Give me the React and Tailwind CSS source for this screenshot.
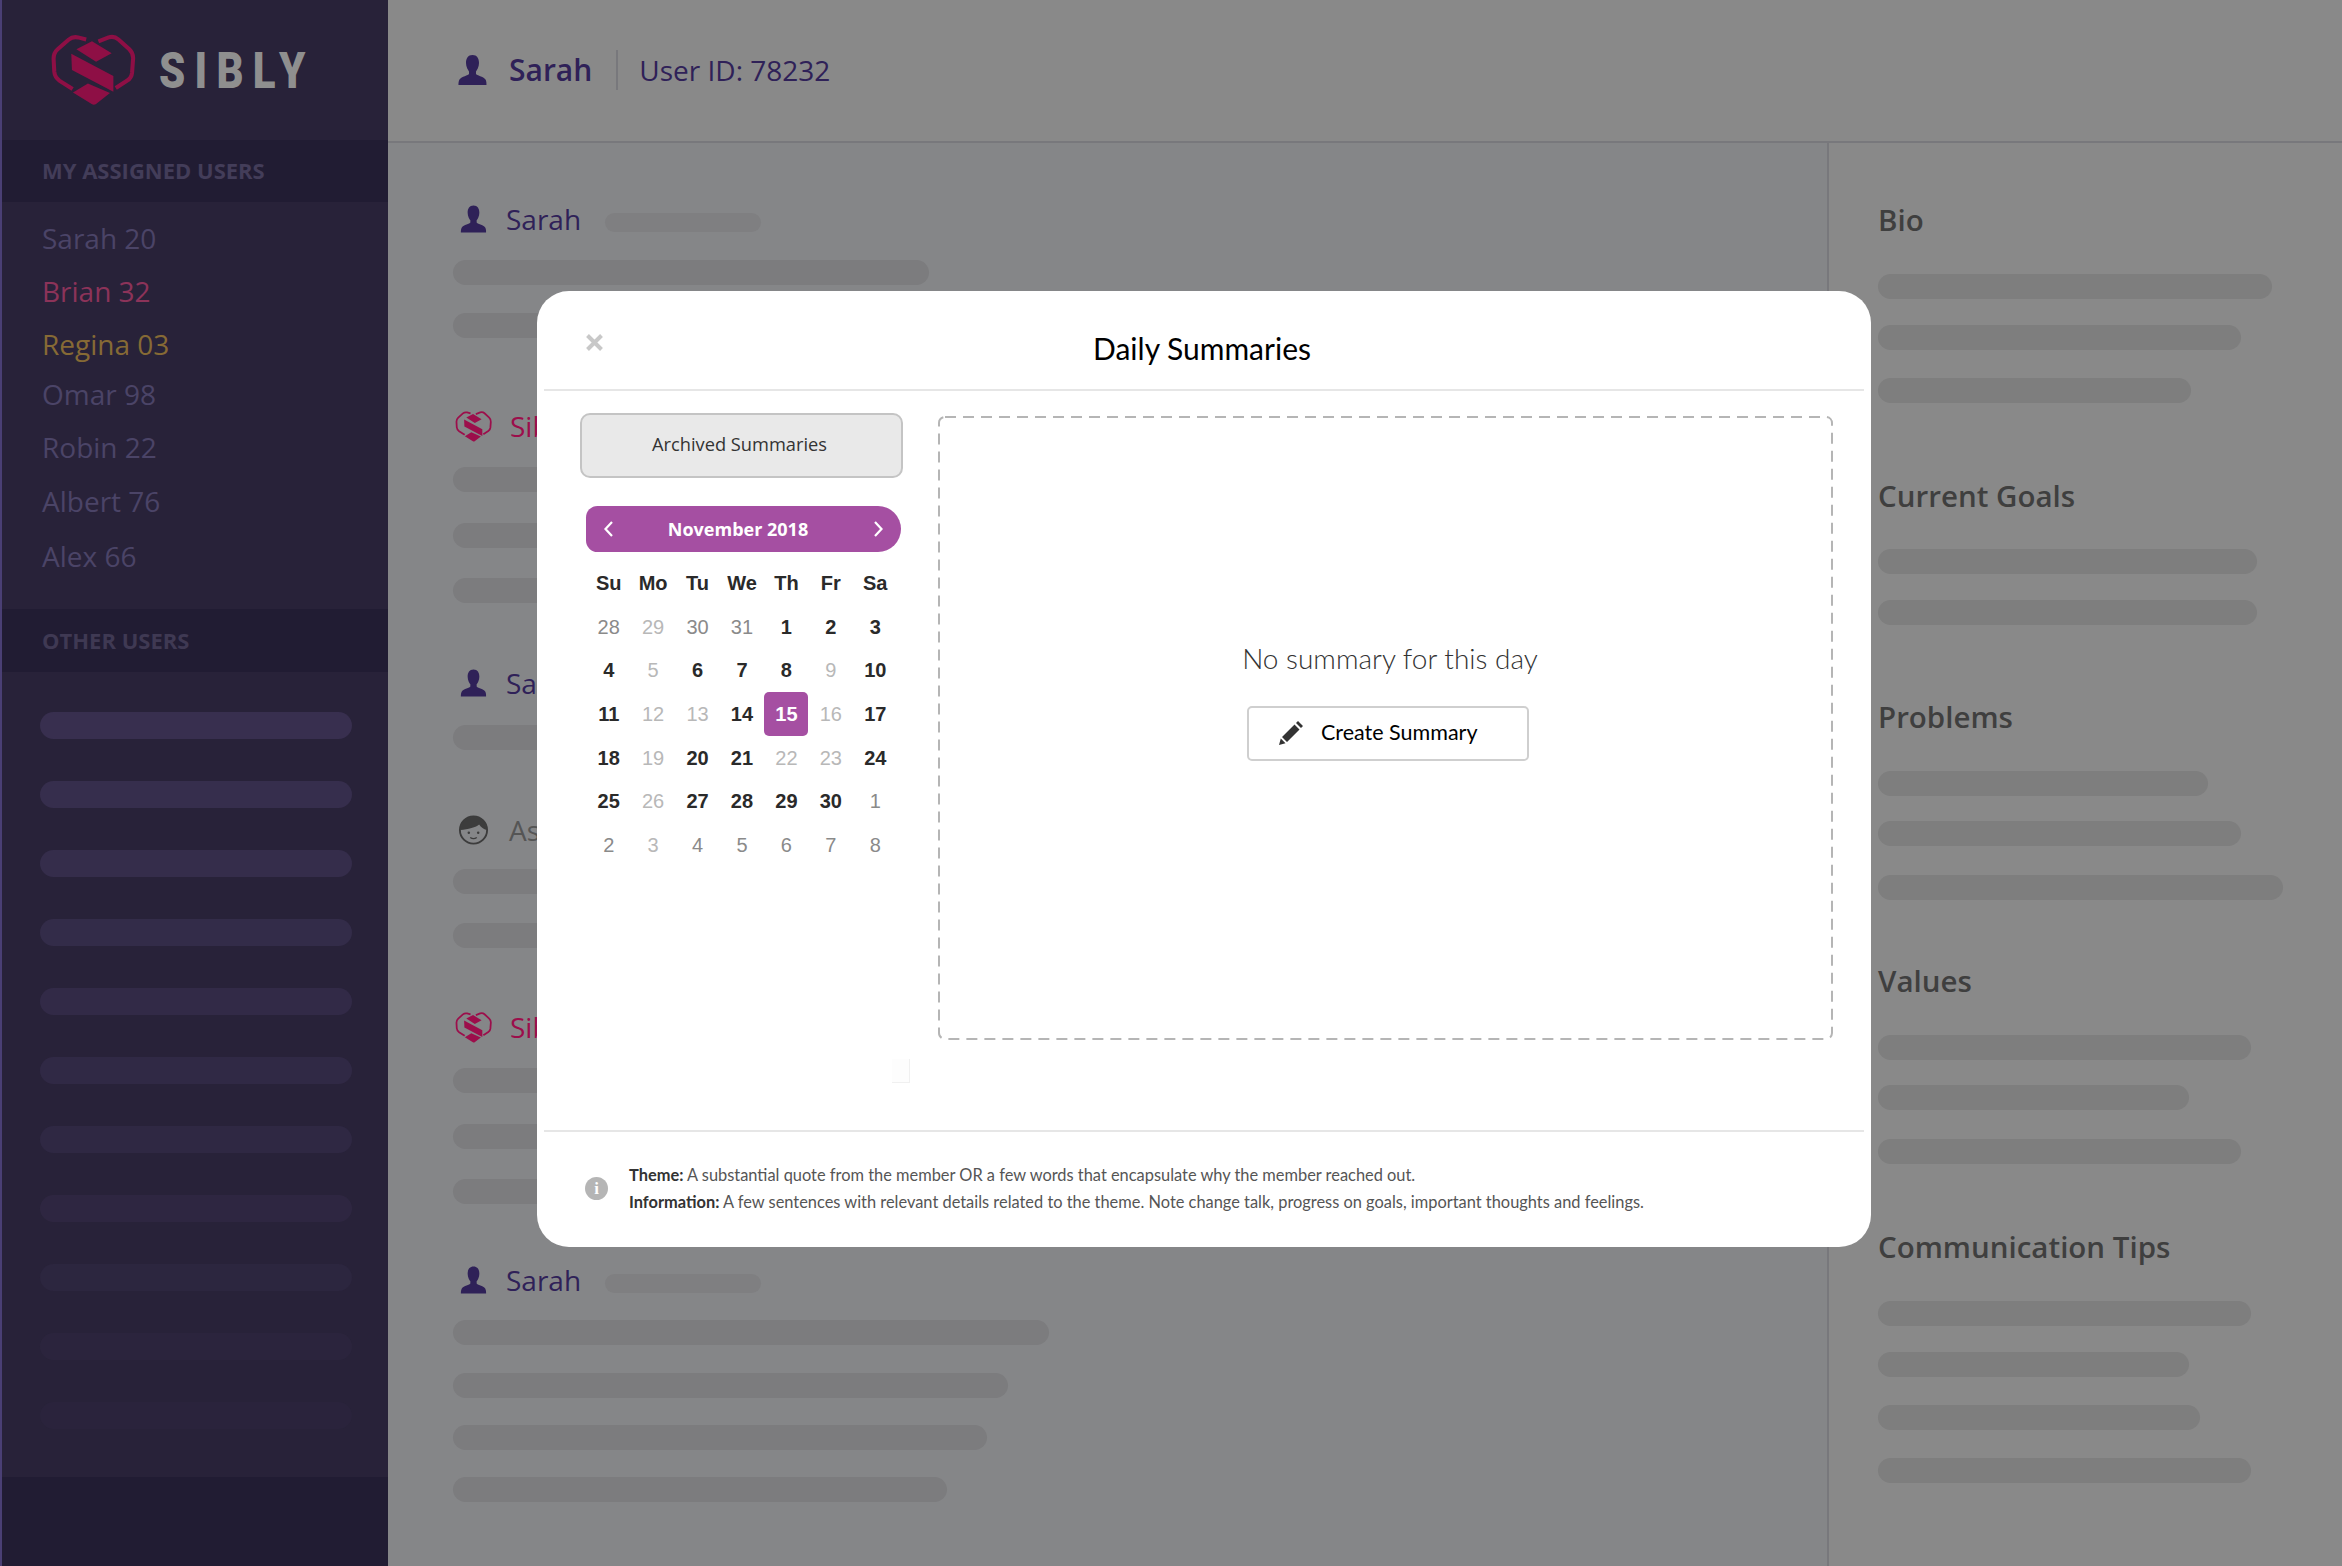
const sans = "font-['Open_Sans',sans-serif]";

function PersonIcon({ className }) {
  return (
    <svg className={className} viewBox="0 0 30 30" fill="currentColor">
      <path d="M15 0C10.5 0 8.5 3.500 8.500 8c0 4 2 7 3 8.500V19c-.5 1.500-7.500 2.500-9.500 5.500C.8 26.500 1 30 1 30h28s.2-3.500-1-5.500c-2-3-9-4-9.500-5.500v-2.500c1-1.500 3-4.500 3-8.500 0-4.500-2-8-6.500-8z" />
    </svg>
  );
}

function FaceIcon({ className }) {
  return (
    <svg className={className} viewBox="0 0 32 32">
      <circle cx="16" cy="16" r="14.500" fill="none" stroke="#3c3c3c" strokeWidth="2" />
      <path d="M2 16C2 7 8 1.500 16 1.500S30 7 30 16c-3-1-6-3-8-6-3 3-12 5-20 6z" fill="#3c3c3c" />
      <circle cx="11" cy="19" r="1.300" fill="#3c3c3c" />
      <circle cx="21" cy="19" r="1.300" fill="#3c3c3c" />
      <path d="M12.500 24c2 1.500 5 1.500 7 0" fill="none" stroke="#3c3c3c" strokeWidth="1.300" />
    </svg>
  );
}

// heart outline with the S cut into it
function Logo({ className, color = '#8e0f45' }) {
  return (
    <svg className={className} viewBox="60 58 252 212">
      <path d="M166 74l-24-6c-10-2-20 0-28 7L82 103c-8 7-12 17-12 28l2 38c1 12 6 20 16 27l38 24" fill="none" stroke={color} strokeWidth="12" />
      <path d="M202 80l30-12c10-3 21-1 29 6l32 29c8 8 12 18 11 29l-3 40c-1 10-6 18-14 23l-34 22" fill="none" stroke={color} strokeWidth="12" />
      <path d="M137 103l46-24 58 36-46 25z" fill={color} />
      <path d="M122 116l124 66v46l-122-64z" fill={color} />
      <path d="M127 230l44-26 65 28-42 33c-4 2-8 2-12-1z" fill={color} />
    </svg>
  );
}

function Bar({ w, className }) {
  return <div className={`h-[25px] rounded-full ${className}`} style={{ width: w }} />;
}

const assigned = [
  { name: 'Sarah 20', cls: 'text-[#4b4467]' },
  { name: 'Brian 32', cls: 'mt-[13px] text-[#8c3359]' },
  { name: 'Regina 03', cls: 'mt-[13px] text-[#866a35]' },
  { name: 'Omar 98', cls: 'mt-[10px] text-[#4b4467]' },
  { name: 'Robin 22', cls: 'mt-[13px] text-[#4b4467]' },
  { name: 'Albert 76', cls: 'mt-[14px] text-[#4b4467]' },
  { name: 'Alex 66', cls: 'mt-[15px] text-[#4b4467]' },
];

const otherBars = [0, 1, 2, 3, 4, 5, 6, 7, 8, 9, 10];

const feed = [
  {
    kind: 'person', label: 'Sarah', top: 'mt-[59px]', small: true,
    bars: [{ w: 476, cls: 'mt-[24px]' }, { w: 440, cls: 'mt-[28px]' }],
  },
  {
    kind: 'logo', label: 'Sibly', top: 'mt-[71px]',
    bars: [{ w: 520, cls: 'mt-[24px]' }, { w: 480, cls: 'mt-[31px]' }, { w: 500, cls: 'mt-[30px]' }],
  },
  {
    kind: 'person', label: 'Sarah', top: 'mt-[63px]',
    bars: [{ w: 460, cls: 'mt-[25px]' }],
  },
  {
    kind: 'face', label: 'As', top: 'mt-[63px]',
    bars: [{ w: 500, cls: 'mt-[22px]' }, { w: 480, cls: 'mt-[29px]' }],
  },
  {
    kind: 'logo', label: 'Sibly', top: 'mt-[62px]',
    bars: [{ w: 520, cls: 'mt-[24px]' }, { w: 480, cls: 'mt-[31px]' }, { w: 500, cls: 'mt-[30px]' }],
  },
  {
    kind: 'person', label: 'Sarah', top: 'mt-[59px]', small: true,
    bars: [{ w: 596, cls: 'mt-[23px]' }, { w: 555, cls: 'mt-[28px]' }, { w: 534, cls: 'mt-[27px]' }, { w: 494, cls: 'mt-[27px]' }],
  },
];

const panels = [
  { title: 'Bio', top: 'mt-[60px]', bars: [{ w: 394, cls: 'mt-[37px]' }, { w: 363, cls: 'mt-[26px]' }, { w: 313, cls: 'mt-[28px]' }] },
  { title: 'Current Goals', top: 'mt-[76px]', bars: [{ w: 379, cls: 'mt-[36px]' }, { w: 379, cls: 'mt-[26px]' }] },
  { title: 'Problems', top: 'mt-[75px]', bars: [{ w: 330, cls: 'mt-[37px]' }, { w: 363, cls: 'mt-[25px]' }, { w: 405, cls: 'mt-[29px]' }] },
  { title: 'Values', top: 'mt-[64px]', bars: [{ w: 373, cls: 'mt-[37px]' }, { w: 311, cls: 'mt-[25px]' }, { w: 363, cls: 'mt-[29px]' }] },
  { title: 'Communication Tips', top: 'mt-[66px]', bars: [{ w: 373, cls: 'mt-[37px]' }, { w: 311, cls: 'mt-[26px]' }, { w: 322, cls: 'mt-[28px]' }, { w: 373, cls: 'mt-[28px]' }] },
];

const weekDays = ['Su', 'Mo', 'Tu', 'We', 'Th', 'Fr', 'Sa'];

const days = [
  [28, 'r'], [29, 'f'], [30, 'r'], [31, 'r'], [1, 'b'], [2, 'b'], [3, 'b'],
  [4, 'b'], [5, 'f'], [6, 'b'], [7, 'b'], [8, 'b'], [9, 'f'], [10, 'b'],
  [11, 'b'], [12, 'f'], [13, 'f'], [14, 'b'], [15, 's'], [16, 'f'], [17, 'b'],
  [18, 'b'], [19, 'f'], [20, 'b'], [21, 'b'], [22, 'f'], [23, 'f'], [24, 'b'],
  [25, 'b'], [26, 'f'], [27, 'b'], [28, 'b'], [29, 'b'], [30, 'b'], [1, 'r'],
  [2, 'r'], [3, 'f'], [4, 'r'], [5, 'r'], [6, 'r'], [7, 'r'], [8, 'r'],
];

const dayStyle = {
  b: 'font-bold text-[#2a2a2a]',
  r: 'text-[#8a8a8a]',
  f: 'text-[#b8b8b8]',
  s: 'font-bold text-white bg-[#a54fa2] rounded-[5px] w-[44px] h-[44px]',
};

function FeedHeader({ item }) {
  return (
    <div className="flex h-[34px] items-center">
      {item.kind === 'person' && <PersonIcon className="ml-[7px] mr-[19px] h-[28px] w-[27px] text-[#2f2158]" />}
      {item.kind === 'logo' && <Logo className="ml-[2px] mr-[18px] h-[35px] w-[37px]" color="#9c0e4b" />}
      {item.kind === 'face' && <FaceIcon className="ml-[5px] mr-[20px] h-[30px] w-[31px]" />}
      <span className={`text-[28px] font-medium ${item.kind === 'logo' ? 'font-bold text-[#9c0e4b]' : item.kind === 'face' ? 'text-[#555555]' : 'text-[#2f2158]'}`}>{item.label}</span>
      {item.small && <div className="ml-[24px] mt-[6px] h-[19px] w-[156px] rounded-full bg-[#7f7f81]" />}
    </div>
  );
}

function Calendar() {
  return (
    <div>
      <div className="ml-[6px] mt-[28px] flex h-[46px] w-[315px] items-center justify-between rounded-l-[12px] rounded-r-[24px] bg-[#a54fa2] px-[17px] text-white">
        <svg className="h-[18px] w-[11px]" viewBox="0 0 11 18" fill="none" stroke="currentColor" strokeWidth="2.200"><path d="M9 2L2.500 9 9 16" /></svg>
        <span className="mr-[11px] text-[18px] font-bold">November 2018</span>
        <svg className="h-[18px] w-[11px]" viewBox="0 0 11 18" fill="none" stroke="currentColor" strokeWidth="2.200"><path d="M2 2l6.500 7L2 16" /></svg>
      </div>
      <div className="ml-[6.500px] mt-[9px] grid w-[311px] grid-cols-7 auto-rows-[43.7px] font-['Liberation_Sans',sans-serif] text-[20px]">
        {weekDays.map((d) => (
          <div key={d} className="flex items-center justify-center font-bold text-[#2a2a2a]">{d}</div>
        ))}
        {days.map(([n, t], i) => (
          <div key={i} className="flex items-center justify-center">
            <div className={`flex items-center justify-center ${dayStyle[t]}`}>{n}</div>
          </div>
        ))}
      </div>
    </div>
  );
}

export default function App() {
  return (
    <div className={`relative flex h-screen w-full overflow-hidden bg-[#858688] ${sans}`}>
      <aside className="flex w-[388px] shrink-0 flex-col border-l-2 border-[#4a3f74] bg-[#282239]">
        <div className="flex h-[140px] shrink-0 items-center pl-[48px]">
          <Logo className="h-[72px] w-[86px]" />
          <span className="ml-[23px] mt-[2px] w-[146px] origin-left scale-x-[0.84] font-['Roboto',sans-serif] text-[50px] font-black tracking-[0.22em] whitespace-nowrap text-[#8f8f8f]">SIBLY</span>
        </div>
        <div className="flex h-[62px] shrink-0 items-center bg-[#211c33] pb-[2px] pl-[40px] text-[22px] font-bold text-[#433d59]">MY ASSIGNED USERS</div>
        <ul className="pl-[40px] pt-[16px]">
          {assigned.map((u) => (
            <li key={u.name} className={`flex h-[40px] items-center text-[28px] leading-[40px] ${u.cls}`}>{u.name}</li>
          ))}
        </ul>
        <div className="mt-[33px] flex h-[63px] shrink-0 items-center bg-[#211c33] pl-[40px] text-[22px] font-bold text-[#3f3953]">OTHER USERS</div>
        <div className="flex flex-col gap-[42px] pl-[38px] pt-[40px]">
          {otherBars.map((i) => (
            <div key={i} className="h-[27px] w-[312px] rounded-full bg-[#382f4f]" style={{ opacity: 1 - i * 0.088 }} />
          ))}
        </div>
        <div className="mt-auto h-[89px] shrink-0 bg-[#211c33]" />
      </aside>

      <div className="flex min-w-0 flex-1 flex-col">
        <header className="flex h-[143px] shrink-0 items-center border-b-2 border-[#78787c] bg-[#898989] pl-[69px] pb-[2px] text-[#2f2158]">
          <PersonIcon className="mr-[21px] h-[30px] w-[31px]" />
          <span className="text-[30px] font-semibold">Sarah</span>
          <div className="ml-[24px] mr-[21px] h-[40px] w-[2px] bg-[#78787c]" />
          <span className="text-[28px]">User ID: 78232</span>
        </header>

        <div className="flex min-h-0 flex-1">
          <main className="flex-1 pl-[65px]">
            {feed.map((item, i) => (
              <section key={i} className={item.top}>
                <FeedHeader item={item} />
                {item.bars.map((b, j) => (
                  <Bar key={j} w={b.w} className={`bg-[#7c7c7e] ${b.cls}`} />
                ))}
              </section>
            ))}
          </main>

          <section className="w-[515px] shrink-0 border-l-2 border-[#78787c] bg-[#898989] pl-[49px]">
            {panels.map((p) => (
              <div key={p.title} className={p.top}>
                <h3 className="h-[34px] text-[29.500px] leading-[33px] font-semibold text-[#3f3f3f]">{p.title}</h3>
                {p.bars.map((b, j) => (
                  <Bar key={j} w={b.w} className={`bg-[#7e7e7e] ${b.cls}`} />
                ))}
              </div>
            ))}
          </section>
        </div>
      </div>

      <div className="absolute left-[537px] top-[291px] flex h-[956px] w-[1334px] flex-col rounded-[32px] bg-white">
        <div className="relative mx-[7px] h-[100px] shrink-0 border-b-2 border-[#e6e6e6]">
          <svg className="absolute left-[42px] top-[43px] h-[17px] w-[17px]" viewBox="0 0 17 17" stroke="#c8c8c8" strokeWidth="4">
            <path d="M1.500 1.500l14 14M15.500 1.500l-14 14" />
          </svg>
          <h2 className="pt-[37px] pr-[4px] text-center font-['Lato',sans-serif] text-[30px] leading-[40px] font-normal text-black">Daily Summaries</h2>
        </div>

        <div className="flex min-h-0 flex-1 pl-[43px]">
          <div className="w-[322px] shrink-0 pt-[22px]">
            <button className="h-[65px] w-[323px] rounded-[10px] border-2 border-[#c4c4c4] bg-[#e9e9e9] pb-[3px] pr-[4px] text-[18.250px] text-[#333333]">Archived Summaries</button>
            <Calendar />
            <div className="ml-[312px] mt-[192px] h-[24px] w-[18px] border-r border-b border-[#f0f0f0] bg-[#fdfdfd]" />
          </div>
          <div className="relative ml-[36px] mt-[25px] flex h-[624px] w-[895px] flex-col items-center pt-[222px]">
            <svg className="absolute inset-0 h-full w-full" viewBox="0 0 895 624" fill="none">
              <rect x="1" y="1" width="893" height="622" rx="6" stroke="#b5b5b5" strokeWidth="2" strokeDasharray="11 7" />
            </svg>
            <p className="ml-[9px] font-['Lato',sans-serif] text-[28px] leading-[40px] font-light text-[#333333]">No summary for this day</p>
            <button className="ml-[5px] mt-[28px] flex h-[55px] w-[282px] items-center rounded-[5px] border-2 border-[#cfcfcf] pb-[2px] pl-[29px] font-['Lato',sans-serif] text-[21.500px] font-normal text-black">
              <svg className="mr-[18px] mt-[2px] h-[25px] w-[25px]" viewBox="0 0 25 25" fill="#333333">
                <path d="M1 24l1.800-6.500 4.700 4.700zM4 16L16.500 3.500l5 5L9 21zM18 2l2-2 5 5-2 2z" />
              </svg>
              Create Summary
            </button>
          </div>
        </div>

        <div className="mx-[7px] flex h-[117px] shrink-0 items-start border-t-2 border-[#e6e6e6] pl-[41px] pt-[29px] font-['Lato',sans-serif] text-[16.400px] leading-[27px] text-[#555555]">
          <div className="flex h-[54px] items-center">
            <div className="flex h-[23px] w-[23px] items-center justify-center rounded-full bg-[#b5b5b5] font-['Liberation_Serif',serif] text-[17px] font-bold text-white">i</div>
          </div>
          <div className="ml-[21px]">
            <p><b className="text-[#333333]">Theme:</b> A substantial quote from the member OR a few words that encapsulate why the member reached out.</p>
            <p><b className="text-[#333333]">Information:</b> A few sentences with relevant details related to the theme. Note change talk, progress on goals, important thoughts and feelings.</p>
          </div>
        </div>
      </div>
    </div>
  );
}
